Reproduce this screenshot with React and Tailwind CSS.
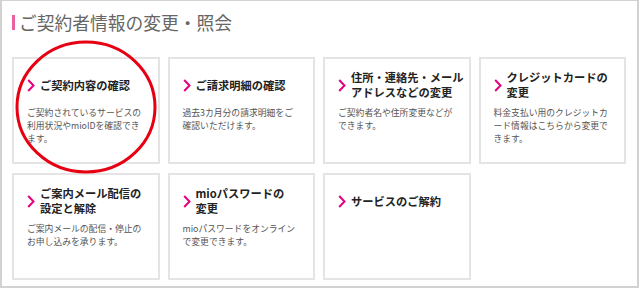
import React from "react";

const cards = [
  { title: ["ご契約内容の確認"], desc: ["ご契約されているサービスの", "利用状況やmioIDを確認でき", "ます。"] },
  { title: ["ご請求明細の確認"], desc: ["過去3カ月分の請求明細をご", "確認いただけます。"] },
  { title: ["住所・連絡先・メール", "アドレスなどの変更"], desc: ["ご契約者名や住所変更などが", "できます。"] },
  { title: ["クレジットカードの", "変更"], desc: ["料金支払い用のクレジットカ", "ード情報はこちらから変更で", "きます。"] },
  { title: ["ご案内メール配信の", "設定と解除"], desc: ["ご案内メールの配信・停止の", "お申し込みを承ります。"] },
  { title: ["mioパスワードの", "変更"], desc: ["mioパスワードをオンライン", "で変更できます。"] },
  { title: ["サービスのご解約"], desc: [] },
];

function Chevron() {
  return (
    <svg width="8" height="13" viewBox="0 0 8 13" className="shrink-0">
      <polyline points="1.2,1 6.5,6.5 1.2,12" fill="none" stroke="#e4007f" strokeWidth="2" />
    </svg>
  );
}

function Card({ title, desc }) {
  return (
    <div className="h-[107px] border-2 border-[#e4e4e4] bg-white pt-[11px] pl-[13px] pr-[6px]">
      <div className="flex items-center h-[30px]">
        <Chevron />
        <div className="ml-[5px] text-[11.25px] leading-[15px] font-bold text-[#222]">
          {title.map((t, i) => (
            <div key={i} className="whitespace-nowrap">{t}</div>
          ))}
        </div>
      </div>
      <div className="mt-[6px] text-[8.8px] leading-[13px] text-[#555]">
        {desc.map((t, i) => (
          <div key={i} className="whitespace-nowrap">{t}</div>
        ))}
      </div>
    </div>
  );
}

export default function App() {
  return (
    <div className="relative w-[640px] h-[288px] bg-white font-['Noto_Sans_CJK_JP','Noto_Sans',sans-serif]">
      <div className="w-[639px] h-[288px] border-x-2 border-b-2 border-t border-[#d2d2d2] pl-[10px] pt-[13px]">
        <div className="flex items-center h-[16px]">
          <div className="w-[3px] h-[15px] bg-[#e8629f]" />
          <div className="ml-[4px] text-[17.75px] leading-[16px] text-[#666] whitespace-nowrap">
            ご契約者情報の変更・照会
          </div>
        </div>
        <div className="mt-[27px] w-[614px] grid grid-cols-4 gap-x-[8px] gap-y-[9px]">
          {cards.map((c, i) => (
            <Card key={i} title={c.title} desc={c.desc} />
          ))}
        </div>
      </div>
      <svg className="absolute left-0 top-0 pointer-events-none" width="640" height="288">
        <ellipse cx="86" cy="107" rx="69" ry="65" fill="none" stroke="#e60012" strokeWidth="3" />
      </svg>
    </div>
  );
}
